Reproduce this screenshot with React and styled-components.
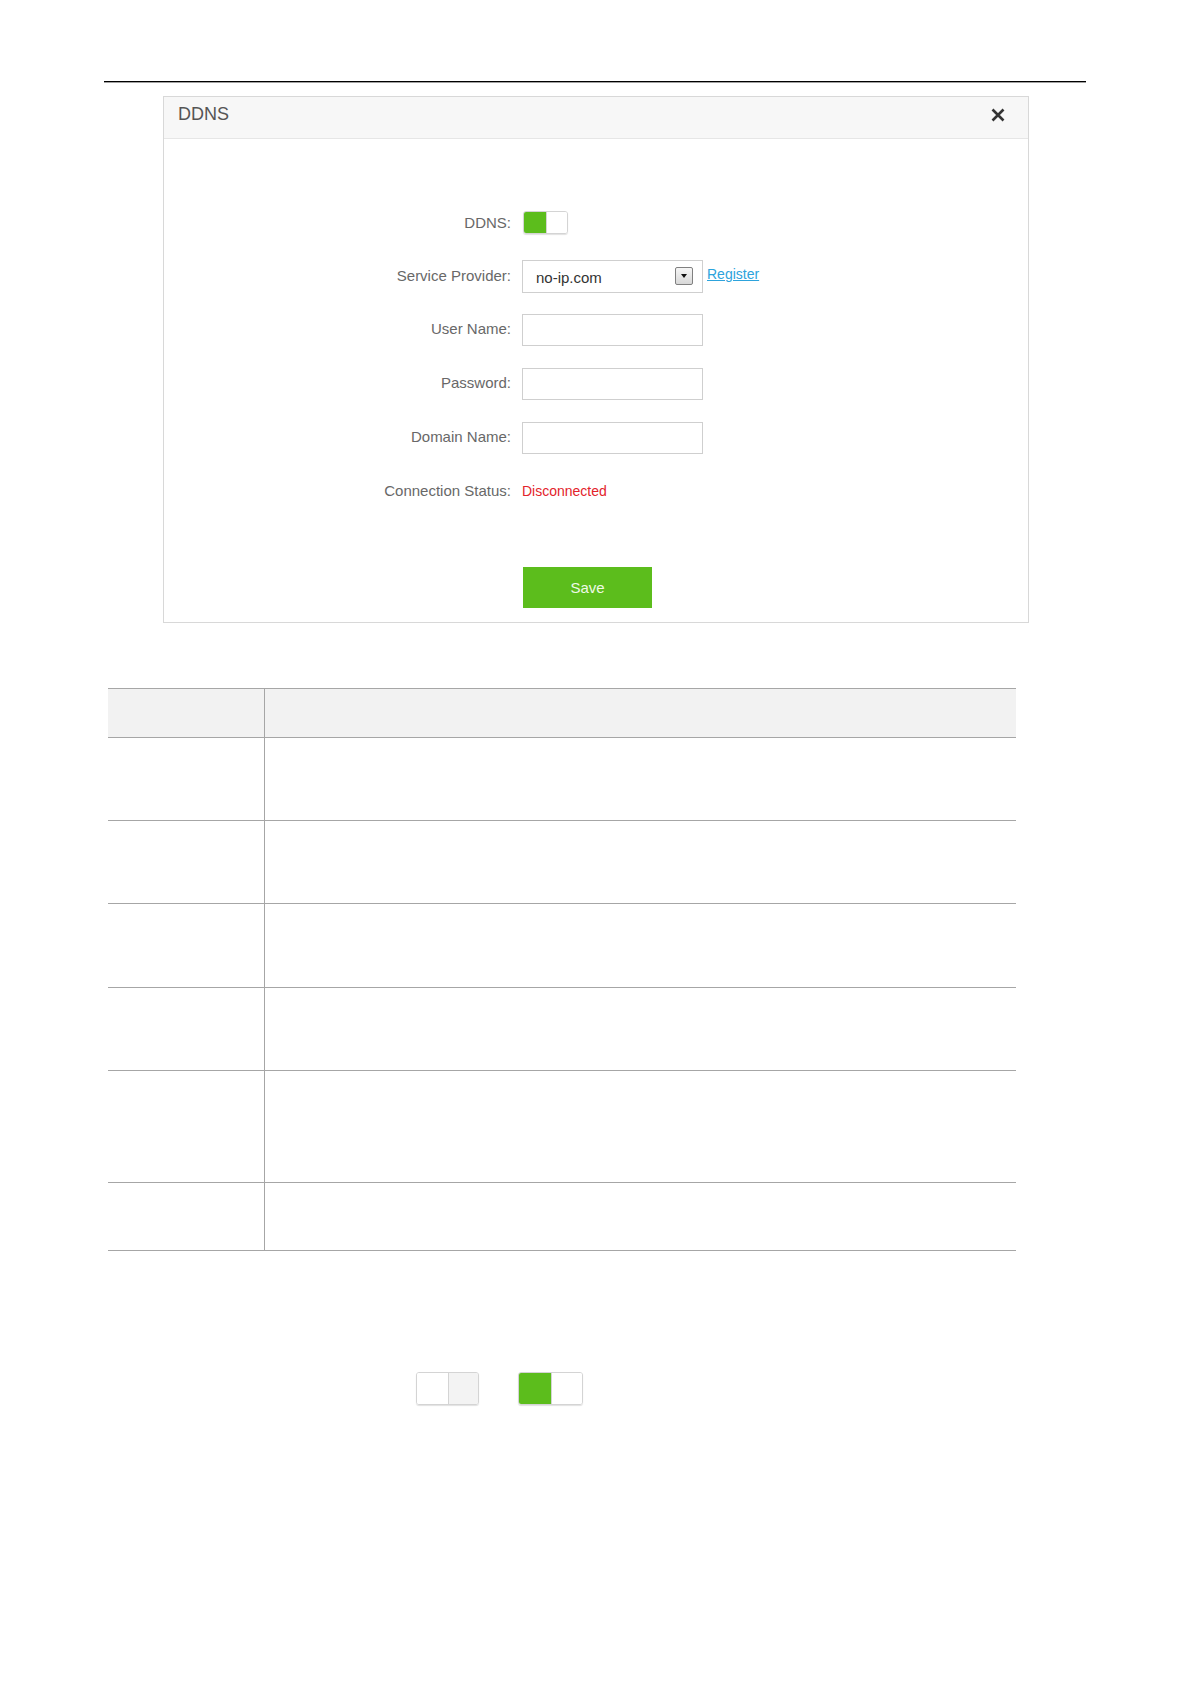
import React from "react";
import styled, { createGlobalStyle } from "styled-components";

const Global = createGlobalStyle`
  html, body { margin: 0; padding: 0; background: #fff; }
  body { font-family: "Liberation Sans", Arial, sans-serif; }
`;

const Page = styled.div`
  width: 1191px;
  min-height: 1684px;
  padding: 81px 0 0 104px;
  box-sizing: border-box;
`;

const Rule = styled.div`
  width: 982px;
  height: 1px;
  background: #000;
  box-shadow: 0 0.5px 0 #444;
`;

const Dialog = styled.div`
  margin: 14px 0 0 59px;
  width: 866px;
  box-sizing: border-box;
  border: 1px solid #d8d8d8;
  background: #fff;
`;

const DialogHeader = styled.div`
  border-bottom: 1px solid #e6e6e6;
  background: #f7f7f7;
  display: flex;
  align-items: center;
  justify-content: space-between;
  padding: 0 23px 6px 14px;
  height: 35px;
`;

const Title = styled.div`
  font-size: 18px;
  color: #555;
`;

const CloseBtn = styled.button`
  border: 0;
  background: none;
  padding: 0;
  width: 14px;
  height: 14px;
  display: flex;
  cursor: pointer;
`;

const DialogBody = styled.div`
  padding: 56px 0 14px 0;
`;

const FormRow = styled.div`
  height: 54px;
  display: grid;
  grid-template-columns: 347px 1fr;
  column-gap: 11px;
  align-items: center;
`;

const Label = styled.div`
  text-align: right;
  font-size: 15px;
  color: #686868;
  padding-bottom: ${(p) => (p.$pb !== undefined ? p.$pb : 3)}px;
`;

const Control = styled.div`
  display: flex;
  align-items: center;
  gap: 4px;
`;

const ToggleBox = styled.div`
  width: ${(p) => p.$w}px;
  height: ${(p) => p.$h}px;
  box-sizing: border-box;
  border: 1px solid #d4d4d4;
  border-radius: 3px;
  box-shadow: 0 1px 1px rgba(0, 0, 0, 0.12);
  display: grid;
  grid-template-columns: 1fr 1fr;
  overflow: hidden;
  margin-left: ${(p) => p.$ml || 0}px;
`;

const ToggleHalf = styled.div`
  background: ${(p) => p.$bg};
  border-left: ${(p) => (p.$divider ? "1px solid #d4d4d4" : "none")};
`;

const SelectBox = styled.div`
  width: 181px;
  height: 33px;
  box-sizing: border-box;
  border: 1px solid #cfcfcf;
  display: flex;
  align-items: center;
  justify-content: space-between;
  padding: 2px 9px 0 13px;
  font-size: 15px;
  color: #333;
  background: #fff;
`;

const ArrowBox = styled.div`
  width: 18px;
  height: 18px;
  box-sizing: border-box;
  border: 1px solid #808080;
  border-radius: 2px;
  background: linear-gradient(#f6f6f6, #d8d8d8);
  display: flex;
  align-items: center;
  justify-content: center;
  margin-top: -2px;
`;

const Arrow = styled.div`
  width: 0;
  height: 0;
  border-left: 3.5px solid transparent;
  border-right: 3.5px solid transparent;
  border-top: 4px solid #111;
`;

const Link = styled.a`
  font-size: 14px;
  color: #2da3dc;
  text-decoration: underline;
  margin-top: -4px;
  cursor: pointer;
`;

const TextInput = styled.input`
  width: 181px;
  height: 32px;
  box-sizing: border-box;
  border: 1px solid #cfcfcf;
  outline: none;
  padding: 0 8px;
  font-family: inherit;
  font-size: 14px;
`;

const Status = styled.span`
  font-size: 14px;
  color: #e3232b;
  padding-bottom: 3px;
`;

const SaveButton = styled.button`
  display: block;
  margin: 48px 0 0 359px;
  width: 129px;
  height: 41px;
  border: 0;
  background: #5cbd1c;
  color: #eef9e6;
  font-family: inherit;
  font-size: 15px;
  cursor: pointer;
`;

const Table = styled.div`
  margin: 65px 0 0 4px;
  width: 908px;
  border-top: 1px solid #a6a6a6;
`;

const TRow = styled.div`
  display: grid;
  grid-template-columns: 157px 1fr;
  height: ${(p) => p.$h}px;
  box-sizing: border-box;
  border-bottom: 1px solid #a6a6a6;
  background: ${(p) => (p.$head ? "#f2f2f2" : "#fff")};
`;

const TCell = styled.div`
  border-right: ${(p) => (p.$first ? "1px solid #a6a6a6" : "none")};
`;

const ToggleLegend = styled.div`
  margin: 121px 0 0 312px;
  display: flex;
  gap: 39px;
`;

function Toggle({ on, w, h, ml }) {
  return (
    <ToggleBox $w={w} $h={h} $ml={ml}>
      <ToggleHalf $bg={on ? "#5cbd1c" : "#ffffff"} />
      <ToggleHalf $bg={on ? "#ffffff" : "#f3f3f3"} $divider />
    </ToggleBox>
  );
}

const rows = [83, 83, 84, 83, 112, 68];

export default function App() {
  return (
    <>
      <Global />
      <Page>
        <Rule />
        <Dialog>
          <DialogHeader>
            <Title>DDNS</Title>
            <CloseBtn aria-label="close">
              <svg width="14" height="14" viewBox="0 0 14 14">
                <path d="M1.5 1.5 L12.5 12.5 M12.5 1.5 L1.5 12.5" stroke="#333" strokeWidth="2.6" strokeLinecap="butt" />
              </svg>
            </CloseBtn>
          </DialogHeader>
          <DialogBody>
            <FormRow>
              <Label $pb={0}>DDNS:</Label>
              <Control>
                <Toggle on w={45} h={23} ml={1} />
              </Control>
            </FormRow>
            <FormRow>
              <Label $pb={2}>Service Provider:</Label>
              <Control>
                <SelectBox>
                  <span>no-ip.com</span>
                  <ArrowBox>
                    <Arrow />
                  </ArrowBox>
                </SelectBox>
                <Link>Register</Link>
              </Control>
            </FormRow>
            <FormRow>
              <Label>User Name:</Label>
              <Control>
                <TextInput type="text" />
              </Control>
            </FormRow>
            <FormRow>
              <Label>Password:</Label>
              <Control>
                <TextInput type="password" />
              </Control>
            </FormRow>
            <FormRow>
              <Label>Domain Name:</Label>
              <Control>
                <TextInput type="text" />
              </Control>
            </FormRow>
            <FormRow>
              <Label>Connection Status:</Label>
              <Control>
                <Status>Disconnected</Status>
              </Control>
            </FormRow>
            <SaveButton>Save</SaveButton>
          </DialogBody>
        </Dialog>
        <Table>
          <TRow $h={49} $head>
            <TCell $first />
            <TCell />
          </TRow>
          {rows.map((h, i) => (
            <TRow key={i} $h={h}>
              <TCell $first />
              <TCell />
            </TRow>
          ))}
        </Table>
        <ToggleLegend>
          <Toggle on={false} w={63} h={33} />
          <Toggle on w={65} h={33} />
        </ToggleLegend>
      </Page>
    </>
  );
}
